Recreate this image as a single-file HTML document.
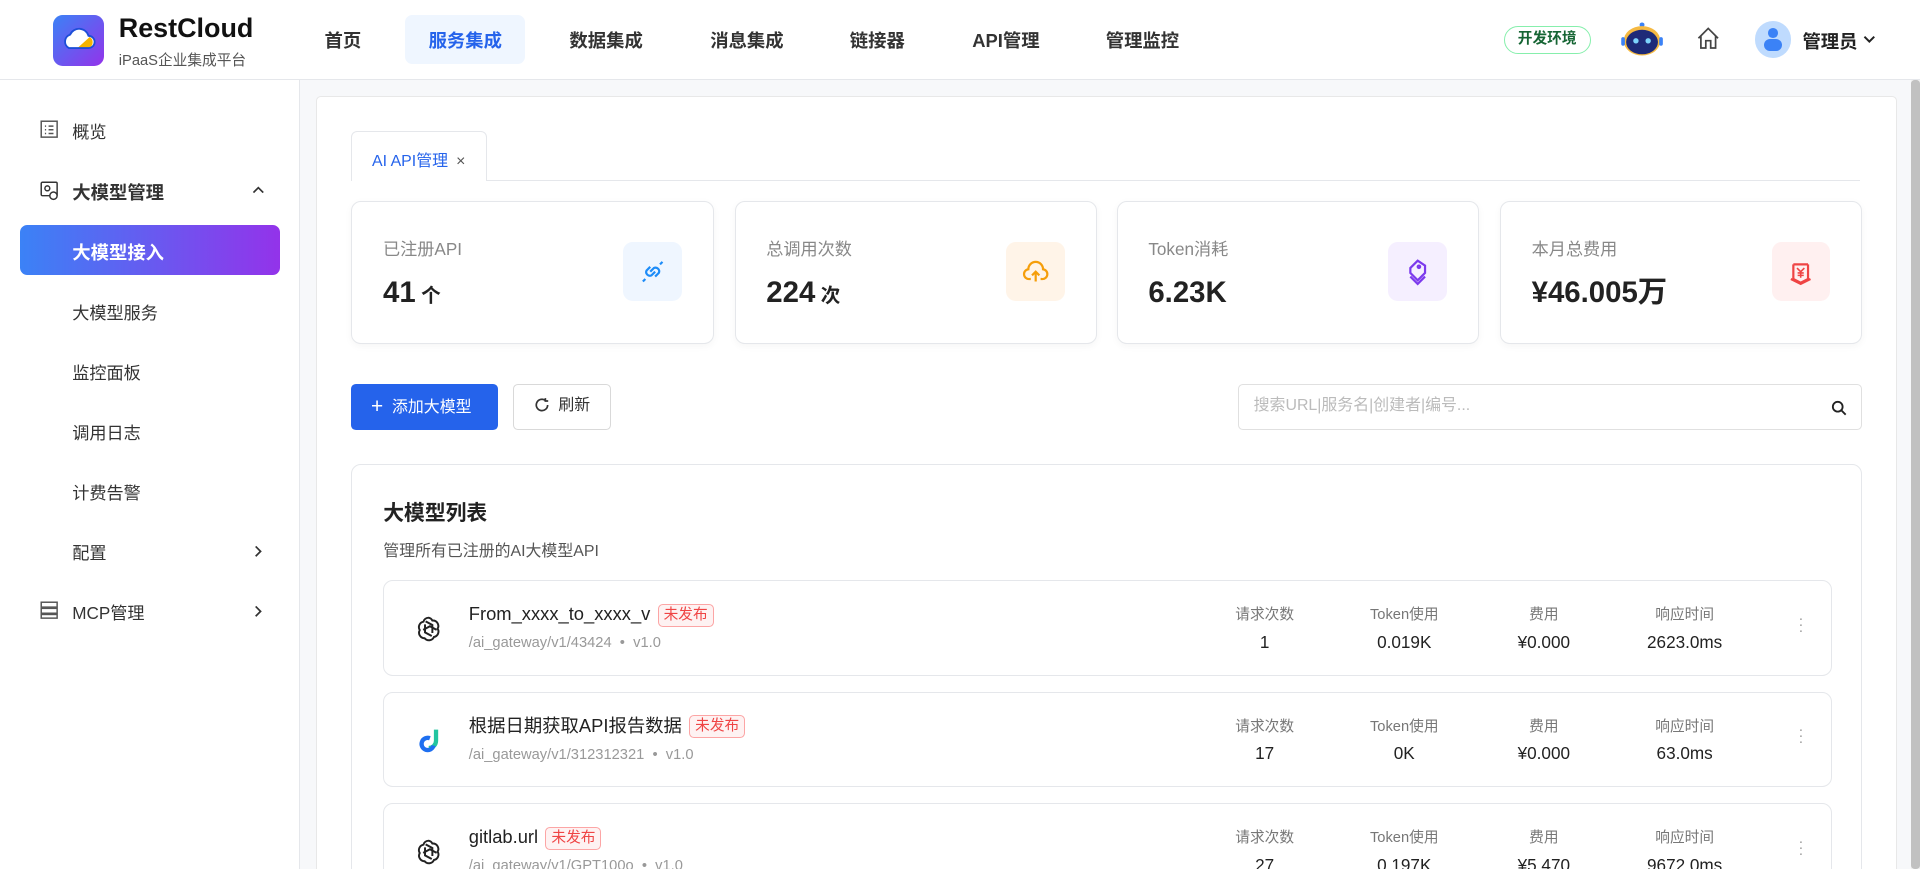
<!DOCTYPE html>
<html><head><meta charset="utf-8"><style>
html{zoom:1.2244898;overflow:hidden}
*{box-sizing:border-box;margin:0;padding:0}
body{width:1568px;height:710px;overflow:hidden;font-family:"Liberation Sans","Noto Sans CJK SC",sans-serif;color:#333;background:#f7f8fa}
#w{position:relative;width:1568px;height:710px;overflow:hidden}
.a{position:absolute}
.hdr{left:0;top:0;width:1568px;height:65px;background:#fff;border-bottom:1px solid #e5e7eb}
.nav{top:22px;font-size:15px;font-weight:600;color:#333}
.side{left:0;top:65px;width:245px;height:645px;background:#fff;border-right:1px solid #e5e7eb}
.si{left:59px;font-size:14px;color:#333}
.card{background:#fff;border:1px solid #e5e7eb;border-radius:8px;box-shadow:0 2px 6px rgba(0,0,0,.04)}
.lbl{font-size:14px;color:#888}
.val{font-size:24px;font-weight:700;color:#222;line-height:30px;white-space:nowrap}
.ib{width:48px;height:48px;border-radius:8px;display:flex;align-items:center;justify-content:center}
.row{left:313px;width:1183px;height:78px;background:#fff;border:1px solid #e5e7eb;border-radius:8px}
.nm{font-size:15px;color:#222;line-height:20px}
.bd{display:inline-block;font-size:12px;color:#ef4444;border:1px solid #fca5a5;background:#fef2f2;border-radius:4px;padding:0 4px;line-height:17px;margin-left:6px;vertical-align:1px}
.pth{font-size:12px;color:#999}
.col{width:100px;text-align:center}
.cl{font-size:12px;color:#777}
.cv{font-size:14px;color:#222;margin-top:6px}
</style></head><body><div id="w">
<div class="a hdr">
 <div class="a" style="left:43px;top:12px;width:42px;height:42px;border-radius:8px;background:linear-gradient(135deg,#3b82f6,#9333ea)">
  <svg width="42" height="42" viewBox="0 0 42 42"><path d="M13 27a6 6 0 0 1 1-11 8 8 0 0 1 15 1 5 5 0 0 1 0 10z" fill="#fff"/><path d="M20 27h9a5 5 0 0 0 1-9" fill="#f5b400"/><path d="M13 27a6 6 0 0 1 1-11 8 8 0 0 1 15 1 5 5 0 0 1 0 10z" fill="none" stroke="#1d4ed8" stroke-width="1.5"/></svg>
 </div>
 <div class="a" style="left:97px;top:11px;font-size:22px;font-weight:700;color:#111">RestCloud</div>
 <div class="a" style="left:97px;top:40px;font-size:12px;color:#555">iPaaS企业集成平台</div>
 <div class="a nav" style="left:265px">首页</div>
 <div class="a" style="left:331px;top:12px;width:98px;height:40px;background:#eff6ff;border-radius:6px"></div>
 <div class="a nav" style="left:350px;color:#2563eb">服务集成</div>
 <div class="a nav" style="left:465px">数据集成</div>
 <div class="a nav" style="left:580px">消息集成</div>
 <div class="a nav" style="left:694px">链接器</div>
 <div class="a nav" style="left:794px">API管理</div>
 <div class="a nav" style="left:903px">管理监控</div>
 <div class="a" style="left:1228px;top:21px;width:71px;height:23px;border:1px solid #86efac;border-radius:12px;font-size:12px;font-weight:700;color:#166534;text-align:center;line-height:21px">开发环境</div>
 <svg class="a" style="left:1323px;top:16px" width="36" height="34" viewBox="0 0 36 34"><circle cx="18" cy="4" r="2" fill="#3b82f6"/><ellipse cx="18" cy="17" rx="15" ry="12" fill="#f5b942"/><ellipse cx="18" cy="18" rx="13" ry="10" fill="#1e2a78"/><circle cx="13" cy="17" r="2.2" fill="#7dd3fc"/><circle cx="23" cy="17" r="2.2" fill="#7dd3fc"/><rect x="1" y="14" width="3" height="7" rx="1.5" fill="#3b82f6"/><rect x="32" y="14" width="3" height="7" rx="1.5" fill="#3b82f6"/></svg>
 <svg class="a" style="left:1385px;top:21px" width="20" height="20" viewBox="0 0 20 20" fill="none" stroke="#444" stroke-width="1.4"><path d="M2 10L10 2l8 8M4 8v10h4v-6h4v6h4V8"/></svg>
 <div class="a" style="left:1433px;top:17px;width:30px;height:30px;border-radius:50%;background:#bfdbfe"><div class="a" style="left:11px;top:6px;width:8px;height:8px;border-radius:50%;background:#3b82f6"></div><div class="a" style="left:8px;top:15px;width:14px;height:10px;border-radius:7px;background:#3b82f6"></div></div>
 <div class="a" style="left:1472px;top:23px;font-size:15px;font-weight:600;color:#222">管理员</div>
 <svg class="a" style="left:1521px;top:27px" width="12" height="10" viewBox="0 0 12 10"><path d="M2 3l4 4 4-4" fill="none" stroke="#222" stroke-width="1.6"/></svg>
</div>
<div class="a side">
 <svg class="a" style="left:33px;top:33px" width="15" height="15" viewBox="0 0 15 15" fill="none" stroke="#555" stroke-width="1.2"><rect x="1" y="1" width="13" height="13"/><path d="M4 5h1M7 5h4M4 8h1M7 8h4M4 11h1M7 11h4"/></svg>
 <div class="a si" style="top:31px">概览</div>
 <svg class="a" style="left:33px;top:83px" width="16" height="16" viewBox="0 0 16 16" fill="none" stroke="#333" stroke-width="1.2"><rect x="1" y="1" width="13" height="11" rx="1"/><circle cx="11" cy="12" r="3" fill="#fff"/><circle cx="6" cy="6" r="2"/></svg>
 <div class="a si" style="top:81px;font-weight:700;font-size:15px">大模型管理</div>
 <svg class="a" style="left:205px;top:85px" width="12" height="10" viewBox="0 0 12 10"><path d="M2 7l4-4 4 4" fill="none" stroke="#333" stroke-width="1.4"/></svg>
 <div class="a" style="left:16px;top:119px;width:213px;height:41px;border-radius:6px;background:linear-gradient(90deg,#3b82f6,#9333ea)"></div>
 <div class="a si" style="top:130px;color:#fff;font-weight:700;font-size:15px">大模型接入</div>
 <div class="a si" style="top:179px">大模型服务</div>
 <div class="a si" style="top:228px">监控面板</div>
 <div class="a si" style="top:277px">调用日志</div>
 <div class="a si" style="top:326px">计费告警</div>
 <div class="a si" style="top:375px">配置</div>
 <svg class="a" style="left:206px;top:379px" width="10" height="12" viewBox="0 0 10 12"><path d="M3 2l4 4-4 4" fill="none" stroke="#333" stroke-width="1.4"/></svg>
 <svg class="a" style="left:33px;top:426px" width="15" height="15" viewBox="0 0 15 15" fill="none" stroke="#555" stroke-width="1.2"><rect x="1" y="1" width="13" height="4"/><rect x="1" y="6" width="13" height="4"/><rect x="1" y="11" width="13" height="3"/></svg>
 <div class="a si" style="top:424px">MCP管理</div>
 <svg class="a" style="left:206px;top:428px" width="10" height="12" viewBox="0 0 10 12"><path d="M3 2l4 4-4 4" fill="none" stroke="#333" stroke-width="1.4"/></svg>
</div>
<div class="a" style="left:1561px;top:65px;width:7px;height:645px;background:#f1f1f1"><div style="width:7px;height:645px;background:#c1c1c1;border-radius:3px"></div></div>
<div class="a" style="left:258px;top:78px;width:1291px;height:640px;background:#fff;border:1px solid #e8e8e8;border-radius:4px"></div>
<div class="a" style="left:287px;top:147px;width:1232px;height:1px;background:#e5e7eb"></div>
<div class="a" style="left:287px;top:107px;width:111px;height:41px;background:#fff;border:1px solid #e5e7eb;border-bottom:none;border-radius:5px 5px 0 0;font-size:13px;color:#2563eb;padding:13px 0 0 16px">AI API管理 <span style="color:#555;margin-left:3px">×</span></div>

<div class="a card" style="left:287px;top:164px;width:296px;height:117px"><div class="a lbl" style="left:25px;top:27px">已注册API</div><div class="a val" style="left:25px;top:60px">41<span style="font-size:16px"> 个</span></div>
<div class="a ib" style="left:221px;top:33px;background:#eff6ff"><svg width="24" height="24" viewBox="0 0 24 24" fill="none" stroke="#1d8cf8" stroke-width="1.8"><path d="M10 8l-3 3a3 3 0 0 0 4 4l3-3M14 16l3-3a3 3 0 0 0-4-4l-3 3M6 18l-2 2M18 6l2-2"/></svg></div></div>
<div class="a card" style="left:600px;top:164px;width:296px;height:117px"><div class="a lbl" style="left:25px;top:27px">总调用次数</div><div class="a val" style="left:25px;top:60px">224<span style="font-size:16px"> 次</span></div>
<div class="a ib" style="left:221px;top:33px;background:#fff4e8"><svg width="24" height="24" viewBox="0 0 24 24" fill="none" stroke="#f59e0b" stroke-width="1.8"><path d="M8 18H7a4 4 0 0 1-1-8 6 6 0 0 1 12 0 4 4 0 0 1-1 8h-1M12 20v-8M9 15l3-3 3 3"/></svg></div></div>
<div class="a card" style="left:912px;top:164px;width:296px;height:117px"><div class="a lbl" style="left:25px;top:27px">Token消耗</div><div class="a val" style="left:25px;top:60px">6.23K</div>
<div class="a ib" style="left:221px;top:33px;background:#f5efff"><svg width="24" height="24" viewBox="0 0 24 24" fill="none" stroke="#7c3aed" stroke-width="1.8"><path d="M12 3l6 4v6l-6 6-6-6 0-4zM6 16l6 6 6-6"/><circle cx="13" cy="8" r="1"/></svg></div></div>
<div class="a card" style="left:1225px;top:164px;width:296px;height:117px"><div class="a lbl" style="left:25px;top:27px">本月总费用</div><div class="a val" style="left:25px;top:60px">¥46.005万</div>
<div class="a ib" style="left:221px;top:33px;background:#fff0f0"><svg width="24" height="24" viewBox="0 0 24 24" fill="none" stroke="#ef4444" stroke-width="1.8"><path d="M6 6v12l6 3 6-3V6M4 18l8 4 8-4M6 6h12"/><path d="M9 9l3 3 3-3M12 12v5M9.5 13h5M9.5 15h5" stroke-width="1.3"/></svg></div></div>

<div class="a" style="left:287px;top:314px;width:120px;height:37px;background:#2563eb;border-radius:4px;color:#fff;font-size:13px;line-height:37px;padding-left:16px"><span style="font-size:17px;vertical-align:-1px">+</span>&nbsp; 添加大模型</div>
<div class="a" style="left:419px;top:314px;width:80px;height:37px;border:1px solid #d9d9d9;border-radius:4px;font-size:13px;line-height:35px;padding-left:16px"><svg width="13" height="13" viewBox="0 0 14 14" style="vertical-align:-2px" fill="none" stroke="#333" stroke-width="1.5"><path d="M12 7a5 5 0 1 1-2-4M10 1v2.5h2.5"/></svg>&nbsp; 刷新</div>
<div class="a" style="left:1011px;top:314px;width:510px;height:37px;border:1px solid #e0e0e0;border-radius:4px;font-size:13px;color:#bbb;line-height:35px;padding-left:12px">搜索URL|服务名|创建者|编号...<svg class="a" style="right:12px;top:12px" width="13" height="13" viewBox="0 0 13 13" fill="none" stroke="#222" stroke-width="1.5"><circle cx="5.5" cy="5.5" r="4"/><path d="M8.5 8.5l3.5 3.5"/></svg></div>

<div class="a" style="left:287px;top:379px;width:1234px;height:340px;background:#fff;border:1px solid #e5e7eb;border-radius:8px"></div>
<div class="a" style="left:313px;top:405px;font-size:17px;font-weight:600;color:#222">大模型列表</div>
<div class="a" style="left:313px;top:439px;font-size:13px;color:#555">管理所有已注册的AI大模型API</div>

<svg width="0" height="0" style="position:absolute"><defs><g id="oa" fill="none" stroke="#222" stroke-width="1.6"><path d="M12 3a4.5 4.5 0 0 0-4.3 3.3 4.5 4.5 0 0 0-3 6.8 4.5 4.5 0 0 0 4 6.7 4.5 4.5 0 0 0 7.6-1 4.5 4.5 0 0 0 3-6.8A4.5 4.5 0 0 0 15 5.3 4.5 4.5 0 0 0 12 3z"/><path d="M9 8.5v6.5l5.5 3M15 15.5V9l-5.5-3M7.5 13l5.5-3 5.5 3"/></g></defs></svg>

<div class="a row" style="top:474px">
 <svg class="a" style="left:24px;top:27px" width="24" height="24" viewBox="0 0 24 24"><use href="#oa"/></svg>
 <div class="a nm" style="left:69px;top:17px">From_xxxx_to_xxxx_v<span class="bd">未发布</span></div>
 <div class="a pth" style="left:69px;top:44px">/ai_gateway/v1/43424 &nbsp;•&nbsp; v1.0</div>
 <div class="a col" style="left:669px;top:18px"><div class="cl">请求次数</div><div class="cv">1</div></div>
 <div class="a col" style="left:783px;top:18px"><div class="cl">Token使用</div><div class="cv">0.019K</div></div>
 <div class="a col" style="left:897px;top:18px"><div class="cl">费用</div><div class="cv">¥0.000</div></div>
 <div class="a col" style="left:1012px;top:18px"><div class="cl">响应时间</div><div class="cv">2623.0ms</div></div>
 <div class="a" style="left:1155px;top:28px;font-size:12px;color:#999;line-height:5px">·<br>·<br>·</div>
</div>
<div class="a row" style="top:565px">
 <svg class="a" style="left:24px;top:27px" width="24" height="24" viewBox="0 0 24 24"><path d="M18 3v9a6 6 0 0 1-6 6" fill="none" stroke="#22c5a0" stroke-width="3.5"/><path d="M13 10a5 5 0 1 0 3 6" fill="none" stroke="#1e6ff0" stroke-width="3.5"/></svg>
 <div class="a nm" style="left:69px;top:17px">根据日期获取API报告数据<span class="bd">未发布</span></div>
 <div class="a pth" style="left:69px;top:44px">/ai_gateway/v1/312312321 &nbsp;•&nbsp; v1.0</div>
 <div class="a col" style="left:669px;top:18px"><div class="cl">请求次数</div><div class="cv">17</div></div>
 <div class="a col" style="left:783px;top:18px"><div class="cl">Token使用</div><div class="cv">0K</div></div>
 <div class="a col" style="left:897px;top:18px"><div class="cl">费用</div><div class="cv">¥0.000</div></div>
 <div class="a col" style="left:1012px;top:18px"><div class="cl">响应时间</div><div class="cv">63.0ms</div></div>
 <div class="a" style="left:1155px;top:28px;font-size:12px;color:#999;line-height:5px">·<br>·<br>·</div>
</div>
<div class="a row" style="top:656px">
 <svg class="a" style="left:24px;top:27px" width="24" height="24" viewBox="0 0 24 24"><use href="#oa"/></svg>
 <div class="a nm" style="left:69px;top:17px">gitlab.url<span class="bd">未发布</span></div>
 <div class="a pth" style="left:69px;top:44px">/ai_gateway/v1/GPT100o &nbsp;•&nbsp; v1.0</div>
 <div class="a col" style="left:669px;top:18px"><div class="cl">请求次数</div><div class="cv">27</div></div>
 <div class="a col" style="left:783px;top:18px"><div class="cl">Token使用</div><div class="cv">0.197K</div></div>
 <div class="a col" style="left:897px;top:18px"><div class="cl">费用</div><div class="cv">¥5.470</div></div>
 <div class="a col" style="left:1012px;top:18px"><div class="cl">响应时间</div><div class="cv">9672.0ms</div></div>
 <div class="a" style="left:1155px;top:28px;font-size:12px;color:#999;line-height:5px">·<br>·<br>·</div>
</div>
</div></body></html>
